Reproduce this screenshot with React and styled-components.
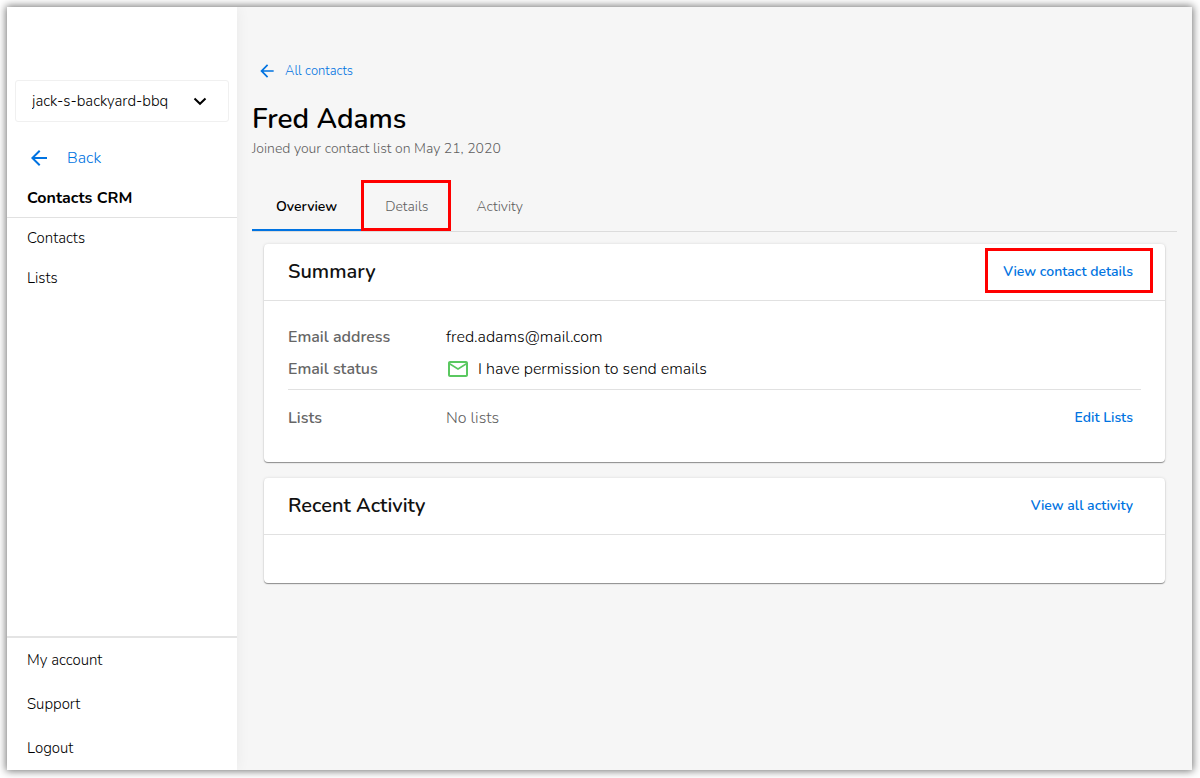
import { useState } from 'react';
import styled, { createGlobalStyle } from 'styled-components';

const GlobalStyle = createGlobalStyle`
  * {
    box-sizing: border-box;
  }

  body {
    margin: 0;
    background-color: white;
    color: #000;
    font-family: Nunito, 'Open Sans', 'Noto Sans', sans-serif;
    font-size: 16px;
    font-weight: 300;
    line-height: 24px;
  }

  button,
  select {
    font: inherit;
    color: inherit;
  }

  a {
    color: inherit;
    text-decoration: none;
  }
`;

const Page = styled.div`
  display: flex;
  min-height: 100vh;
  padding: 7px 8px 8px 7px;
`;

const Window = styled.div`
  display: flex;
  flex: 1;
  background-color: #f6f6f6;
  box-shadow: 0 0 8px 1px rgba(0, 0, 0, 0.55);
`;

const Sidebar = styled.aside`
  display: flex;
  flex-direction: column;
  flex-shrink: 0;
  width: 230px;
  padding-top: 73px;
  background-color: white;
  box-shadow: 0 0 14px rgba(0, 0, 0, 0.06);
  clip-path: inset(0 -14px 0 0);
`;

const SiteField = styled.label`
  display: grid;
  align-items: center;
  margin: 0 8px 16px;

  > * {
    grid-area: 1 / 1;
  }

  svg {
    justify-self: end;
    margin-right: 22px;
    pointer-events: none;
  }
`;

const SiteSelect = styled.select`
  width: 100%;
  height: 42px;
  padding: 0 40px 0 16px;
  appearance: none;
  border: 1px solid #f0f0f0;
  border-radius: 3px;
  background-color: white;
  font-size: 15px;
  cursor: pointer;
`;

const BackLink = styled.a`
  display: flex;
  align-items: center;
  gap: ${({ $small }) => ($small ? '8px' : '16px')};
  height: ${({ $small }) => ($small ? '24px' : '40px')};
  padding-left: ${({ $small }) => ($small ? '5px' : '20px')};
  color: #0073e1;
  font-size: ${({ $small }) => ($small ? '13px' : '16px')};
`;

const SideTitle = styled.h2`
  height: 40px;
  margin: 0;
  padding: 0 20px;
  border-bottom: 1px solid #e1e1e1;
  font-size: 16px;
  font-weight: 700;
  line-height: 40px;
`;

const SideLink = styled.a`
  display: block;
  padding: 0 20px;
  font-size: 15px;
  line-height: ${({ $tall }) => ($tall ? '44px' : '40px')};
`;

const AccountNav = styled.nav`
  margin-top: auto;
  border-top: 2px solid #e4e4e4;
`;

const Main = styled.main`
  flex: 1;
  min-width: 0;
  padding: 52px 15px 24px;
`;

const Title = styled.h1`
  margin: 20px 0 0;
  font-size: 28px;
  font-weight: 600;
  line-height: 32px;
`;

const Joined = styled.p`
  margin: 2px 0 0;
  color: #5f5f5f;
  font-size: 14px;
  line-height: 24px;
`;

const Tabs = styled.div`
  display: flex;
  margin-top: 20px;
  border-bottom: 1px solid #dcdcdc;
`;

const Tab = styled.button`
  position: relative;
  height: 50px;
  padding: 4px 24px 0;
  border: none;
  border-bottom: 2px solid ${({ $active }) => ($active ? '#0073e1' : 'transparent')};
  background: none;
  color: ${({ $active }) => ($active ? '#000' : '#5f5f5f')};
  font-size: 14px;
  font-weight: ${({ $active }) => ($active ? 600 : 300)};
  cursor: pointer;
`;

const Highlight = styled.span`
  position: absolute;
  inset: ${({ $inset }) => $inset};
  border: 3px solid #ff0000;
  pointer-events: none;
`;

const Cards = styled.div`
  display: flex;
  flex-direction: column;
  gap: 16px;
  padding: 12px 12px 0;
`;

const Card = styled.section`
  border-radius: 4px;
  background-color: white;
  box-shadow: 0 1px 1px rgba(0, 0, 0, 0.4), 0 0 3px rgba(0, 0, 0, 0.12);
`;

const CardHeader = styled.header`
  display: flex;
  align-items: center;
  justify-content: space-between;
  height: 57px;
  padding: 0 24px;
  border-bottom: 1px solid #e1e1e1;
`;

const CardTitle = styled.h3`
  margin: 0;
  color: #111;
  font-size: 20px;
  font-weight: 600;
  line-height: 28px;
`;

const TextButton = styled.button`
  position: relative;
  height: 36px;
  padding: 0 8px;
  border: none;
  background: none;
  color: #0073e1;
  font-size: 14px;
  font-weight: 600;
  cursor: pointer;
`;

const CardBody = styled.div`
  min-height: 48px;
`;

const Details = styled.dl`
  margin: 0;
  padding: 20px 24px 17px;
`;

const DetailRow = styled.div`
  display: flex;
  align-items: center;
  height: ${({ $tall }) => ($tall ? '56px' : '32px')};
  margin-top: ${({ $tall }) => ($tall ? '4px' : '0')};
  border-top: ${({ $tall }) => ($tall ? '1px solid #e1e1e1' : 'none')};

  dt {
    flex: 0 0 158px;
    color: #666;
    font-weight: 600;
  }

  dd {
    display: flex;
    flex: 1;
    align-items: center;
    justify-content: space-between;
    margin: 0;
    color: ${({ $muted }) => ($muted ? '#5f5f5f' : '#000')};
  }
`;

const Status = styled.span`
  display: flex;
  align-items: center;
  gap: 8px;
`;

const ArrowIcon = ({ size }) => (
  <svg width={size} height={size} viewBox="0 0 24 24" fill="#0073e1" aria-hidden="true">
    <path d="M20 11H7.83l5.59-5.59L12 4l-8 8 8 8 1.41-1.41L7.83 13H20v-2z" />
  </svg>
);

const ChevronIcon = () => (
  <svg width="14" height="14" viewBox="0 0 14 14" fill="none" stroke="#000" strokeWidth="2" aria-hidden="true">
    <path d="M1.5 4.5 7 9.8l5.5-5.3" />
  </svg>
);

const MailIcon = () => (
  <svg width="24" height="24" viewBox="0 0 24 24" fill="#5ac860" aria-hidden="true">
    <path d="M20 4H4c-1.1 0-1.99.9-1.99 2L2 18c0 1.1.9 2 2 2h16c1.1 0 2-.9 2-2V6c0-1.1-.9-2-2-2zm0 14H4V8l8 5 8-5v10zm-8-7L4 6h16l-8 5z" />
  </svg>
);

const tabs = ['Overview', 'Details', 'Activity'];

const App = () => {
  const [active, setActive] = useState('Overview');

  return (
    <Page>
      <GlobalStyle />
      <Window>
        <Sidebar>
          <SiteField>
            <SiteSelect aria-label="Site">
              <option>jack-s-backyard-bbq</option>
            </SiteSelect>
            <ChevronIcon />
          </SiteField>
          <BackLink href="#back">
            <ArrowIcon size={24} />
            Back
          </BackLink>
          <SideTitle>Contacts CRM</SideTitle>
          <nav>
            <SideLink href="#contacts">Contacts</SideLink>
            <SideLink href="#lists">Lists</SideLink>
          </nav>
          <AccountNav>
            <SideLink $tall href="#account">My account</SideLink>
            <SideLink $tall href="#support">Support</SideLink>
            <SideLink $tall href="#logout">Logout</SideLink>
          </AccountNav>
        </Sidebar>
        <Main>
          <BackLink $small href="#all">
            <ArrowIcon size={20} />
            All contacts
          </BackLink>
          <Title>Fred Adams</Title>
          <Joined>Joined your contact list on May 21, 2020</Joined>
          <Tabs role="tablist">
            {tabs.map((tab) => (
              <Tab
                key={tab}
                type="button"
                role="tab"
                aria-selected={tab === active}
                $active={tab === active}
                onClick={() => setActive(tab)}
              >
                {tab}
                {tab === 'Details' && <Highlight $inset="-1px 2px -2px 0" />}
              </Tab>
            ))}
          </Tabs>
          <Cards>
            <Card>
              <CardHeader>
                <CardTitle>Summary</CardTitle>
                <TextButton type="button">
                  View contact details
                  <Highlight $inset="-6px -12px -3px -10px" />
                </TextButton>
              </CardHeader>
              <Details>
                <DetailRow>
                  <dt>Email address</dt>
                  <dd>fred.adams@mail.com</dd>
                </DetailRow>
                <DetailRow>
                  <dt>Email status</dt>
                  <dd>
                    <Status>
                      <MailIcon />
                      I have permission to send emails
                    </Status>
                  </dd>
                </DetailRow>
                <DetailRow $tall $muted>
                  <dt>Lists</dt>
                  <dd>
                    No lists
                    <TextButton type="button">Edit Lists</TextButton>
                  </dd>
                </DetailRow>
              </Details>
            </Card>
            <Card>
              <CardHeader>
                <CardTitle>Recent Activity</CardTitle>
                <TextButton type="button">View all activity</TextButton>
              </CardHeader>
              <CardBody />
            </Card>
          </Cards>
        </Main>
      </Window>
    </Page>
  );
};

export default App;
